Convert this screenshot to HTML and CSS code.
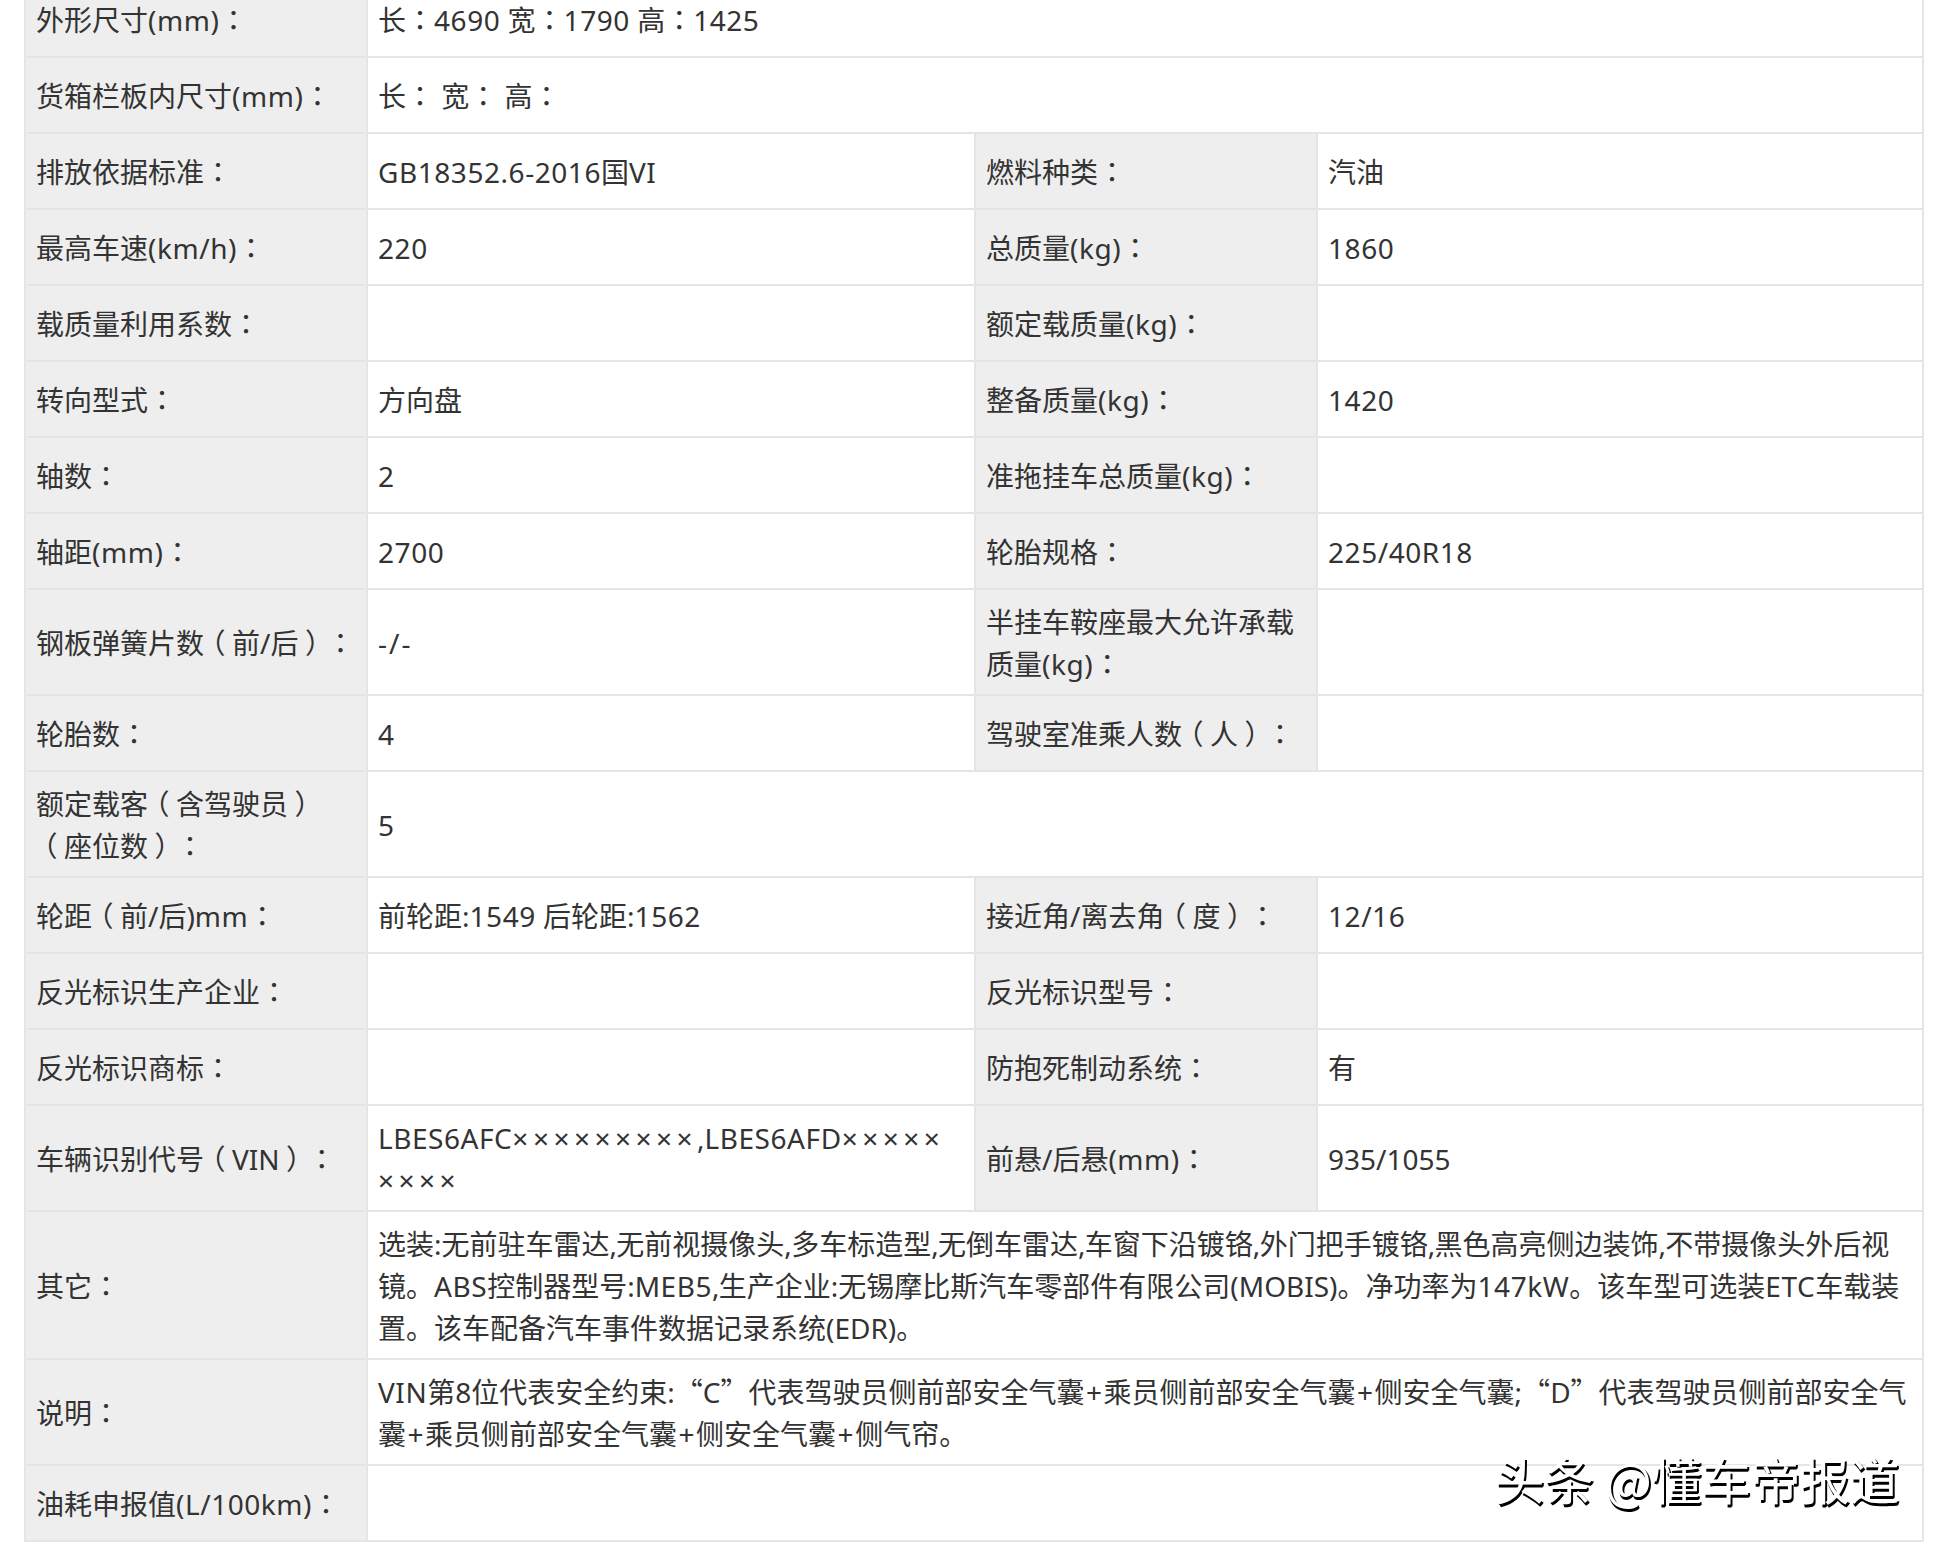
FILE: index.html
```html
<!DOCTYPE html>
<html lang="zh-CN">
<head>
<meta charset="utf-8">
<title>车辆参数</title>
<link rel="stylesheet" href="styles.css">
</head>
<body>
<main class="page">
<table class="spec">
<colgroup><col class="c1"><col class="c2"><col class="c3"><col class="c4"></colgroup>
<tbody>
<tr><th>外形尺寸<span class="n">(mm)</span><i>：</i></th><td colspan="3">长<i>：</i><span class="n">4690</span> 宽<i>：</i><span class="n">1790</span> 高<i>：</i><span class="n">1425</span></td></tr>
<tr><th>货箱栏板内尺寸<span class="n">(mm)</span><i>：</i></th><td colspan="3">长<i>：</i> 宽<i>：</i> 高<i>：</i></td></tr>
<tr><th>排放依据标准<i>：</i></th><td><span class="n">GB18352.6-2016</span>国<span class="n">VI</span></td><th>燃料种类<i>：</i></th><td>汽油</td></tr>
<tr><th>最高车速<span class="n">(km/h)</span><i>：</i></th><td><span class="n">220</span></td><th>总质量<span class="n">(kg)</span><i>：</i></th><td><span class="n">1860</span></td></tr>
<tr><th>载质量利用系数<i>：</i></th><td></td><th>额定载质量<span class="n">(kg)</span><i>：</i></th><td></td></tr>
<tr><th>转向型式<i>：</i></th><td>方向盘</td><th>整备质量<span class="n">(kg)</span><i>：</i></th><td><span class="n">1420</span></td></tr>
<tr><th>轴数<i>：</i></th><td>2</td><th>准拖挂车总质量<span class="n">(kg)</span><i>：</i></th><td></td></tr>
<tr><th>轴距<span class="n">(mm)</span><i>：</i></th><td><span class="n">2700</span></td><th>轮胎规格<i>：</i></th><td><span class="n">225/40R18</span></td></tr>
<tr><th>钢板弹簧片数<i class="po">（</i>前/后<i class="pc">）</i><i>：</i></th><td><span class="w">-/-</span></td><th>半挂车鞍座最大允许承载质量<span class="n">(kg)</span><i>：</i></th><td></td></tr>
<tr><th>轮胎数<i>：</i></th><td>4</td><th>驾驶室准乘人数<i class="po">（</i>人<i class="pc">）</i><i>：</i></th><td></td></tr>
<tr><th>额定载客<i class="po">（</i>含驾驶员<i class="pc">）</i><i class="po">（</i>座位数<i class="pc">）</i><i>：</i></th><td colspan="3">5</td></tr>
<tr><th>轮距<i class="po">（</i>前/后)<span class="n">mm</span><i>：</i></th><td>前轮距:<span class="n">1549</span> 后轮距:<span class="n">1562</span></td><th>接近角/离去角<i class="po">（</i>度<i class="pc">）</i><i>：</i></th><td><span class="n">12/16</span></td></tr>
<tr><th>反光标识生产企业<i>：</i></th><td></td><th>反光标识型号<i>：</i></th><td></td></tr>
<tr><th>反光标识商标<i>：</i></th><td></td><th>防抱死制动系统<i>：</i></th><td>有</td></tr>
<tr><th>车辆识别代号<i class="po">（</i>VIN<i class="pc">）</i><i>：</i></th><td><span class="n">LBES6AFC</span><b>×××××××××</b>,<span class="n">LBES6AFD</span><b>×××××</b><br><b>××××</b></td><th>前悬/后悬<span class="n">(mm)</span><i>：</i></th><td>935/1055</td></tr>
<tr><th>其它<i>：</i></th><td colspan="3">选装:无前驻车雷达<span class="k">,</span>无前视摄像头<span class="k">,</span>多车标造型<span class="k">,</span>无倒车雷达<span class="k">,</span>车窗下沿镀铬<span class="k">,</span>外门把手镀铬<span class="k">,</span>黑色高亮侧边装饰<span class="k">,</span>不带摄像头外后视镜。<span class="n">ABS</span>控制器型号:<span class="n">MEB5</span><span class="k">,</span>生产企业:无锡摩比斯汽车零部件有限公司(MOBIS)。净功率为<span class="n">147kW</span>。该车型可选装<span class="n">ETC</span>车载装置。该车配备汽车事件数据记录系统(EDR)。</td></tr>
<tr><th>说明<i>：</i></th><td colspan="3"><span class="n">VIN</span>第8位代表安全约束:<u>“</u>C<u>”</u>代表驾驶员侧前部安全气囊<span class="m">+</span>乘员侧前部安全气囊<span class="m">+</span>侧安全气囊;<u>“</u>D<u>”</u>代表驾驶员侧前部安全气囊<span class="m">+</span>乘员侧前部安全气囊<span class="m">+</span>侧安全气囊<span class="m">+</span>侧气帘。</td></tr>
<tr><th>油耗申报值<span class="n">(L/100km)</span><i>：</i></th><td colspan="3"></td></tr>
</tbody>
</table>
<div class="mark">头条 @懂车帝报道</div>
</main>
</body>
</html>
```

FILE: styles.css
```css
html, body {
  margin: 0;
  padding: 0;
  background: #fff;
}
body {
  height: 1552px;
  overflow: hidden;
}
.page {
  position: relative;
  height: 1552px;
  padding: 0 20px 0 24px;
  font-family: "Noto Sans", "Noto Sans CJK SC", sans-serif;
  font-size: 28px;
  line-height: 42px;
  color: #333;
  text-spacing-trim: space-all;
}
.spec {
  width: 1898px;
  margin-top: -20px;
  border-collapse: collapse;
  table-layout: fixed;
  border: 2px solid #e5e5e5;
}
.c1 { width: 342px; }
.c2 { width: 608px; }
.c3 { width: 342px; }
.c4 { width: 606px; }
.spec tr { height: 76px; }
.spec th, .spec td {
  padding: 11px 10px 9px;
  border: 2px solid #e5e5e5;
  text-align: left;
  font-weight: 400;
  vertical-align: middle;
}
.spec th { background: #eee; }
.spec i {
  font-style: normal;
  font-family: "Noto Sans CJK TC", sans-serif;
  font-feature-settings: "locl" 0;
  line-height: 1;
}
.spec i.po {
  margin-left: -0.23em;
  margin-right: 0.23em;
}
.spec i.pc {
  margin-left: 0.23em;
  margin-right: -0.23em;
}
.spec u {
  text-decoration: none;
  font-family: "Noto Sans CJK SC", sans-serif;
  line-height: 1;
}
.spec b {
  font-weight: 400;
  letter-spacing: 4.5px;
}
.n { letter-spacing: 0.55px; }
.w { letter-spacing: 2px; }
.k { letter-spacing: -0.7px; }
.m { padding: 0 1.5px; }
.mark {
  position: absolute;
  left: 1495px;
  top: 1469px;
  font-family: "Noto Sans CJK SC", sans-serif;
  font-size: 49.5px;
  line-height: 60px;
  white-space: nowrap;
  color: #fff;
  text-shadow: 2px 2px 0 #000, 1px 3px 0 #000;
}
```
